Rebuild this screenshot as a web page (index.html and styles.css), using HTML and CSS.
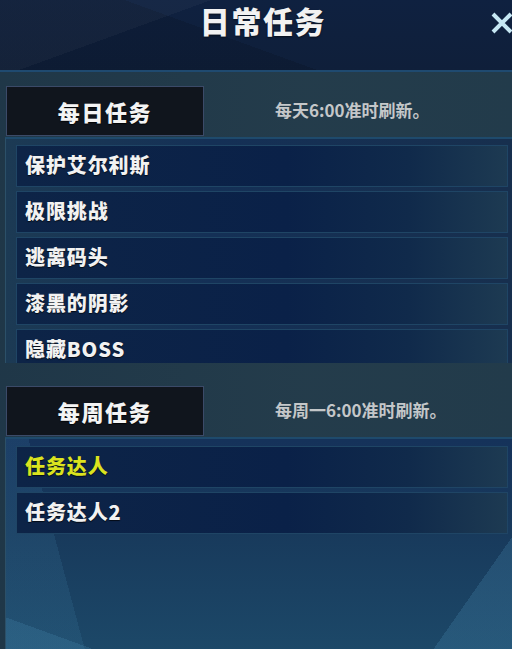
FILE: index.html
```html
<!DOCTYPE html>
<html lang="zh-CN">
<head>
<meta charset="utf-8">
<title>日常任务</title>
<link rel="stylesheet" href="styles.css">
</head>
<body>
<div class="window">
  <header class="topbar">
    <h1 class="title">日常任务</h1>
    <button class="close" aria-label="关闭">
      <svg width="24" height="24" viewBox="0 0 24 24"><path d="M3 3 L21 21 M21 3 L3 21" stroke="#c6e8f4" stroke-width="4" stroke-linecap="butt" fill="none"/></svg>
    </button>
  </header>

  <main class="content">
    <section class="section">
      <div class="section-head">
        <div class="tab">每日任务</div>
        <div class="note">每天6:00准时刷新。</div>
      </div>
      <div class="list list-daily">
        <div class="row">保护艾尔利斯</div>
        <div class="row">极限挑战</div>
        <div class="row">逃离码头</div>
        <div class="row">漆黑的阴影</div>
        <div class="row">隐藏BOSS</div>
      </div>
    </section>

    <section class="section section-fill">
      <div class="section-head head-weekly">
        <div class="tab">每周任务</div>
        <div class="note">每周一6:00准时刷新。</div>
      </div>
      <div class="list list-weekly">
        <div class="row row-active">任务达人</div>
        <div class="row">任务达人2</div>
      </div>
    </section>
  </main>
</div>
</body>
</html>
```

FILE: styles.css
```css
* { box-sizing: border-box; }

html, body {
  margin: 0;
  padding: 0;
}

body {
  width: 512px;
  height: 649px;
  overflow: hidden;
  background: #223a4b;
  font-family: "Noto Sans CJK SC", "Noto Sans", sans-serif;
  font-weight: 700;
}

.window {
  width: 512px;
  height: 649px;
  display: flex;
  flex-direction: column;
}

.topbar {
  height: 72px;
  flex: none;
  display: flex;
  justify-content: center;
  align-items: flex-start;
  background:
    linear-gradient(160deg, rgba(255,255,255,0.03) 0 30%, transparent 30%),
    linear-gradient(200deg, transparent 0 55%, rgba(0,0,0,0.12) 55%),
    linear-gradient(180deg, #0f2140 0%, #0f1f3a 100%);
  border-bottom: 2px solid #1f4a70;
}

.title {
  margin: 1px 0 0 14px;
  font-size: 30px;
  line-height: 38px;
  letter-spacing: 1.6px;
  color: #f2f2f2;
  font-weight: 900;
  text-shadow: 0 1px 2px rgba(0,0,0,0.6);
}

.close {
  position: absolute;
  top: 11px;
  left: 490px;
  width: 24px;
  height: 24px;
  padding: 0;
  border: 0;
  background: none;
}

.close svg { display: block; }

.content {
  flex: 1;
  display: flex;
  flex-direction: column;
  background:
    linear-gradient(90deg, rgba(20,40,60,0.25), rgba(40,60,70,0.15) 60%, rgba(30,55,70,0.2)),
    #233c4c;
}

.section {
  display: flex;
  flex-direction: column;
}

.section-fill {
  flex: 1;
}

.section-head {
  display: flex;
  align-items: center;
  padding: 14px 0 1px 6px;
}

.head-weekly {
  padding-top: 23px;
}

.tab {
  width: 198px;
  height: 50px;
  background: #10151d;
  border: 1px solid #3b4a68;
  color: #f4f4f4;
  font-size: 22px;
  font-weight: 900;
  letter-spacing: 1.6px;
  display: flex;
  align-items: center;
  justify-content: center;
  text-shadow: 0 1px 1px rgba(0,0,0,0.8);
}

.note {
  margin-left: 71px;
  margin-top: -4px;
  font-size: 17px;
  color: #c4c7c9;
  letter-spacing: 0;
}

.list {
  margin-left: 5px;
  padding: 6px 4px 0 10px;
  border-top: 2px solid #1e4a6c;
  border-left: 1px solid #2c5068;
  background: linear-gradient(90deg, #1c3a54 0%, #143056 40%, #172f4e 100%);
  display: flex;
  flex-direction: column;
  gap: 4px;
  overflow: hidden;
}

.list-daily {
  height: 226px;
}

.list-weekly {
  flex: 1;
  padding-top: 7px;
  background:
    linear-gradient(125deg, transparent 0 88%, rgba(80,150,190,0.22) 88%),
    linear-gradient(20deg, rgba(80,150,190,0.2) 0 8%, transparent 8%),
    linear-gradient(75deg, rgba(70,140,180,0.15) 0 14%, transparent 14%),
    linear-gradient(180deg, #15325a 0%, #183a5c 45%, #1c4868 100%);
}

.row {
  flex: none;
  height: 42px;
  padding: 0 0 3px 8px;
  display: flex;
  align-items: center;
  border: 1px solid #1f4565;
  background: linear-gradient(90deg, #0d2447 0%, #0a2148 55%, #102a4b 80%, #1d3a52 100%);
  color: #f2f2f2;
  font-size: 20px;
  font-weight: 900;
  letter-spacing: 0.9px;
  text-shadow: 0 1px 1px rgba(0,0,0,0.7);
}

.row-active {
  color: #dbe31f;
}
```
